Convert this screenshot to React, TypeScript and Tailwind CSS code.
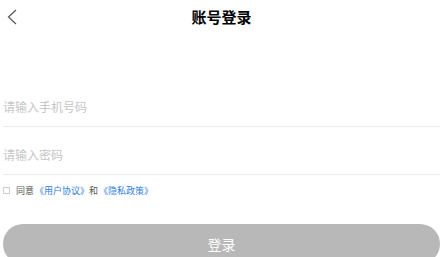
import React, { useState } from 'react';

const font = { fontFamily: '"Noto Sans CJK SC", "Noto Sans", sans-serif' };

function App() {
  const [phone, setPhone] = useState('');
  const [password, setPassword] = useState('');
  const [agreed, setAgreed] = useState(false);

  return (
    <div className="w-[443px] h-[257px] overflow-hidden bg-white" style={font}>
      {/* Header */}
      <header className="relative h-[32px] flex items-center justify-center">
        <button className="absolute left-[6px] top-[8px] w-[14px] h-[18px] text-[#555]">
          <svg width="14" height="18" viewBox="0 0 14 18" fill="none">
            <path d="M10 2 L2.5 9 L10 16" stroke="currentColor" strokeWidth="1.2" />
          </svg>
        </button>
        <h1 className="text-[15px] font-bold text-black leading-none">账号登录</h1>
      </header>

      {/* Form */}
      <div className="mx-[3px] mt-[54px]">
        <input
          autoFocus
          value={phone}
          onChange={(e) => setPhone(e.target.value)}
          placeholder="请输入手机号码"
          className="block w-full h-[41px] border-b border-[#ececec] text-[12px] text-[#333] placeholder:text-[#c6c6c6] outline-none caret-[#1d7c6e] pt-[1px]"
        />
        <input
          type="password"
          value={password}
          onChange={(e) => setPassword(e.target.value)}
          placeholder="请输入密码"
          className="block w-full h-[41px] mt-[7px] border-b border-[#ececec] text-[12px] text-[#333] placeholder:text-[#c6c6c6] outline-none pt-[1px]"
        />

        <div className="flex items-center h-[14px] mt-[8px] text-[9px] leading-none">
          <button
            onClick={() => setAgreed(!agreed)}
            className={`w-[7px] h-[7px] border border-[#cfcfcf] ${agreed ? 'bg-[#2f80e0]' : 'bg-white'}`}
          />
          <span className="ml-[6px] text-[#555]">同意</span>
          <a className="ml-[1px] text-[#2f80e0]">《用户协议》</a>
          <span className="text-[#555]">和</span>
          <a className="ml-[1px] text-[#2f80e0]">《隐私政策》</a>
        </div>

        <button
          disabled={!phone || !password || !agreed}
          className="block w-full h-[40px] mt-[27px] rounded-full bg-[#b8b8b8] text-white text-[14px]"
        >
          登录
        </button>
      </div>
    </div>
  );
}

export default App;
